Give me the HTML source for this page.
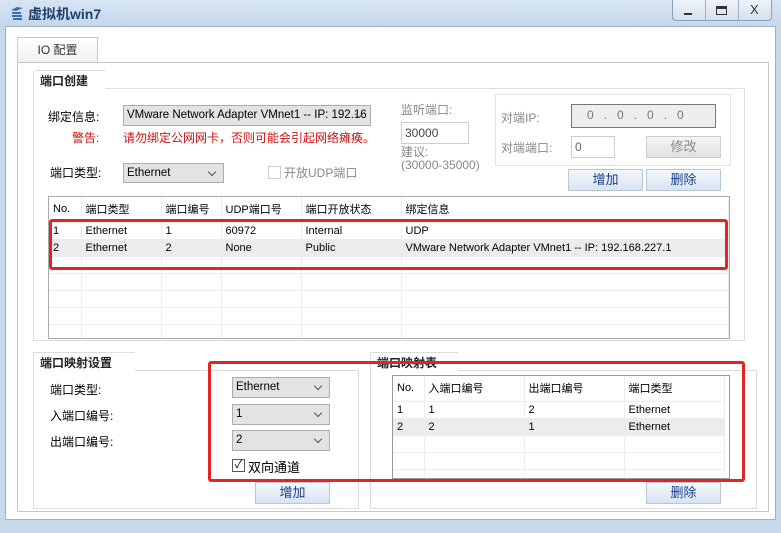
<!DOCTYPE html>
<html><head><meta charset="utf-8"><style>
*{box-sizing:border-box;margin:0;padding:0}
body{width:781px;height:533px;overflow:hidden;background:#c9d9ec;font-family:"Liberation Sans","Noto Sans CJK SC",sans-serif;font-size:12px;color:#000;position:relative}
.a{position:absolute;white-space:nowrap}
.sel{position:absolute;background:#e3e3e3;border:1px solid #adadad;padding-left:3px;line-height:19px;font-size:11.5px;overflow:hidden;white-space:nowrap;padding-right:22px}
.sel:after{content:"";position:absolute;right:8px;top:5px;width:5px;height:5px;border-right:1px solid #555;border-bottom:1px solid #555;transform:rotate(45deg)}
.btn{position:absolute;border:1px solid #b9c6d6;background:linear-gradient(#f4f8fc,#d8e4f1);text-align:center;line-height:20px;color:#1a3f8a;font-size:13px}
.grp{position:absolute;border:1px solid #dcdcdc}
.gt{position:absolute;font-weight:bold;font-size:12px;color:#222;background:#fff;border:1px solid #dcdcdc;border-bottom:none;border-right:none;padding:1px 6px}
.red{position:absolute;border:3px solid #e32424;border-radius:3px}
table{border-collapse:collapse;font-size:11px}
td{height:17px;padding-left:4px;border-right:1px solid #ececec;border-bottom:1px solid #ececec;white-space:nowrap}
tr.g td{background:#ececec}
.gray{color:#888}
</style></head><body>
<div class="a" style="left:0;top:0;width:781px;height:27px;background:linear-gradient(#d7e4f3,#c6d7ec)"></div>
<svg class="a" style="left:9px;top:5px" width="16" height="16"><path d="M2 5 L8 2 L14 3 L7 6Z" fill="#3a6fb0"/><path d="M3 8 h9 M3 11 h10 M4 14 h9" stroke="#3a6fb0" stroke-width="2"/></svg>
<div class="a" style="left:28px;top:4px;font-size:14px;font-weight:bold;color:#1d3e6e">虚拟机win7</div>
<div class="a" style="left:672px;top:0;width:100px;height:21px;border:1px solid #8aa0bb;border-top:none;border-radius:0 0 4px 4px;background:linear-gradient(#eef3f9,#d5e1ef)"></div>
<div class="a" style="left:705px;top:0;width:1px;height:20px;background:#9fb1c7"></div>
<div class="a" style="left:738px;top:0;width:1px;height:20px;background:#9fb1c7"></div>
<div class="a" style="left:684px;top:13px;width:8px;height:2px;background:#333"></div>
<div class="a" style="left:716px;top:6px;width:11px;height:9px;border:1px solid #333;border-top:3px solid #333"></div>
<div class="a" style="left:750px;top:2px;font-size:13px;color:#333">X</div>
<div class="a" style="left:5px;top:26px;width:771px;height:494px;background:#fff;border:1px solid #9db0c8"></div>
<div class="a" style="left:17px;top:37px;width:81px;height:26px;background:linear-gradient(#fff,#f0f0f0);border:1px solid #c8c8c8;border-bottom:none;text-align:center;line-height:24px;color:#333">IO 配置</div>
<div class="a" style="left:17px;top:62px;width:752px;height:450px;border:1px solid #c8c8c8"></div>
<!-- group 1 -->
<div class="grp" style="left:33px;top:88px;width:712px;height:253px"></div>
<div class="gt" style="left:33px;top:70px;width:72px;height:19px;border-top-left-radius:3px">端口创建</div>
<div class="a" style="left:48px;top:108px">绑定信息:</div>
<div class="sel" style="left:123px;top:105px;width:248px;height:21px">VMware Network Adapter VMnet1 -- IP: 192.16</div>
<div class="a" style="left:72px;top:129px;color:#d01010">警告:</div>
<div class="a" style="left:123px;top:129px;color:#d01010">请勿绑定公网网卡，否则可能会引起网络瘫痪。</div>
<div class="a" style="left:50px;top:164px">端口类型:</div>
<div class="sel" style="left:123px;top:163px;width:101px;height:20px">Ethernet</div>
<div class="a" style="left:268px;top:166px;width:13px;height:13px;border:1px solid #ccc"></div>
<div class="a gray" style="left:284px;top:164px">开放UDP端口</div>
<div class="a gray" style="left:401px;top:101px">监听端口:</div>
<div class="a" style="left:401px;top:122px;width:68px;height:22px;border:1px solid #ccc;padding:3px;color:#444">30000</div>
<div class="a gray" style="left:401px;top:146px;line-height:13px">建议:<br>(30000-35000)</div>
<div class="a" style="left:495px;top:94px;width:236px;height:72px;border:1px solid #e2e2e2"></div>
<div class="a gray" style="left:501px;top:109px">对端IP:</div>
<div class="a" style="left:571px;top:104px;width:145px;height:24px;background:#eee;border:1px solid #777;color:#777;line-height:21px"><span style="margin-left:15px">0&nbsp;&nbsp;&nbsp;.&nbsp;&nbsp;&nbsp;0&nbsp;&nbsp;&nbsp;.&nbsp;&nbsp;&nbsp;0&nbsp;&nbsp;&nbsp;.&nbsp;&nbsp;&nbsp;0</span></div>
<div class="a gray" style="left:501px;top:139px">对端端口:</div>
<div class="a" style="left:571px;top:136px;width:44px;height:22px;border:1px solid #ccc;padding:3px;color:#666">0</div>
<div class="btn" style="left:646px;top:136px;width:75px;height:22px;background:linear-gradient(#f6f6f6,#e0e0e0);border-color:#ccc;color:#888">修改</div>
<div class="btn" style="left:568px;top:169px;width:75px;height:22px">增加</div>
<div class="btn" style="left:646px;top:169px;width:75px;height:22px">删除</div>
<div class="a" style="left:48px;top:196px;width:682px;height:143px;border:1px solid #aaa;overflow:hidden">
<table style="width:100%"><tr><td style="width:32px;height:25px">No.</td><td style="width:80px">端口类型</td><td style="width:60px">端口编号</td><td style="width:80px">UDP端口号</td><td style="width:100px">端口开放状态</td><td>绑定信息</td></tr>
<tr><td>1</td><td>Ethernet</td><td>1</td><td>60972</td><td>Internal</td><td>UDP</td></tr>
<tr class="g"><td>2</td><td>Ethernet</td><td>2</td><td>None</td><td>Public</td><td>VMware Network Adapter VMnet1 -- IP: 192.168.227.1</td></tr>
<tr><td></td><td></td><td></td><td></td><td></td><td></td></tr><tr><td></td><td></td><td></td><td></td><td></td><td></td></tr><tr><td></td><td></td><td></td><td></td><td></td><td></td></tr><tr><td></td><td></td><td></td><td></td><td></td><td></td></tr><tr><td></td><td></td><td></td><td></td><td></td><td></td></tr></table></div>
<div class="red" style="left:49px;top:219px;width:679px;height:51px"></div>
<!-- group 2 -->
<div class="grp" style="left:33px;top:370px;width:326px;height:139px"></div>
<div class="gt" style="left:33px;top:352px;width:102px;height:19px">端口映射设置</div>
<div class="a" style="left:50px;top:381px">端口类型:</div>
<div class="a" style="left:50px;top:407px">入端口编号:</div>
<div class="a" style="left:50px;top:433px">出端口编号:</div>
<div class="sel" style="left:232px;top:377px;width:98px;height:21px">Ethernet</div>
<div class="sel" style="left:232px;top:404px;width:98px;height:21px">1</div>
<div class="sel" style="left:232px;top:430px;width:98px;height:21px">2</div>
<div class="a" style="left:232px;top:459px;width:13px;height:13px;border:1px solid #555;font-size:11px;line-height:11px;text-align:center">✓</div>
<div class="a" style="left:248px;top:457px;font-size:13px">双向通道</div>
<div class="btn" style="left:255px;top:482px;width:75px;height:22px">增加</div>
<!-- group 3 -->
<div class="grp" style="left:370px;top:370px;width:387px;height:139px"></div>
<div class="gt" style="left:370px;top:352px;width:88px;height:19px">端口映射表</div>
<div class="a" style="left:392px;top:375px;width:338px;height:104px;border:1px solid #999;overflow:hidden">
<table style="width:332px"><tr><td style="width:31px;height:25px">No.</td><td style="width:100px">入端口编号</td><td style="width:100px">出端口编号</td><td>端口类型</td></tr>
<tr><td>1</td><td>1</td><td>2</td><td>Ethernet</td></tr>
<tr class="g"><td>2</td><td>2</td><td>1</td><td>Ethernet</td></tr>
<tr><td></td><td></td><td></td><td></td></tr><tr><td></td><td></td><td></td><td></td></tr><tr><td></td><td></td><td></td><td></td></tr></table></div>
<div class="btn" style="left:646px;top:482px;width:75px;height:22px">删除</div>
<div class="red" style="left:208px;top:361px;width:537px;height:121px"></div>
</body></html>
